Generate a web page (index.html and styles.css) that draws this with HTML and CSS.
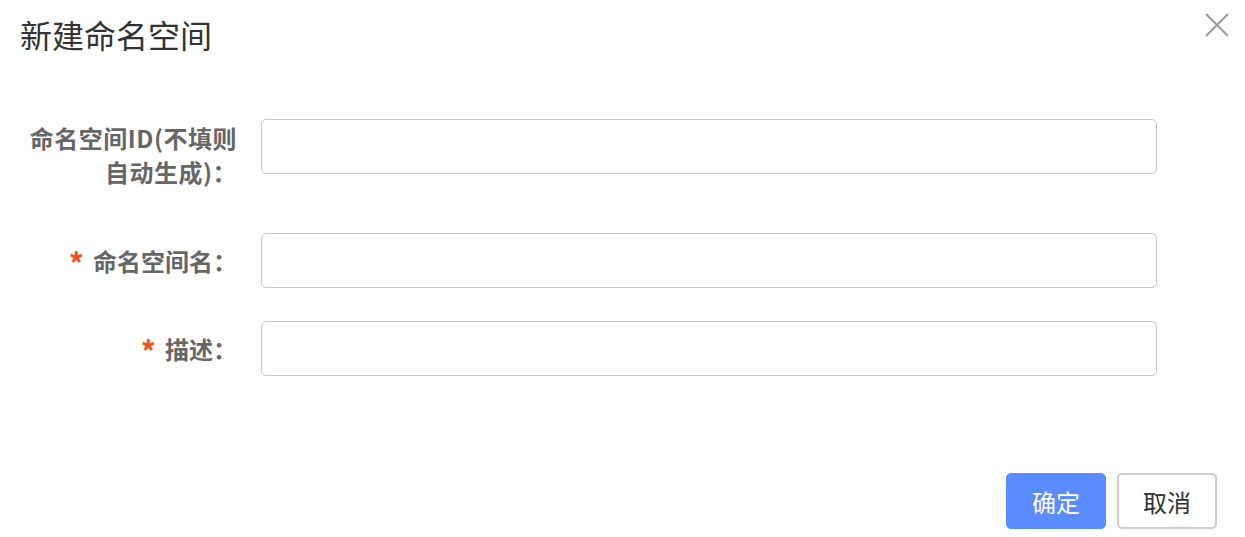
FILE: index.html
```html
<!DOCTYPE html>
<html lang="zh-CN">
<head>
<meta charset="utf-8">
<title>新建命名空间</title>
<link rel="stylesheet" href="styles.css">
</head>
<body>
<div class="dialog">
  <div class="header">
    <h2 class="title">新建命名空间</h2>
    <button class="close" type="button" aria-label="关闭">
      <svg width="24" height="24" viewBox="0 0 24 24"><path d="M1 1L23 23M23 1L1 23" stroke="#9a9a9a" stroke-width="2" fill="none"/></svg>
    </button>
  </div>
  <form class="form">
    <div class="row row-first">
      <label class="label label-wrap">命名空间ID(不填则自动生成)：</label>
      <input class="input" type="text">
    </div>
    <div class="row">
      <label class="label"><span class="req">*</span>命名空间名：</label>
      <input class="input" type="text">
    </div>
    <div class="row">
      <label class="label"><span class="req">*</span>描述：</label>
      <input class="input" type="text">
    </div>
  </form>
  <div class="footer">
    <button class="btn btn-primary" type="button">确定</button>
    <button class="btn btn-default" type="button">取消</button>
  </div>
</div>
</body>
</html>
```
FILE: styles.css
```css
* { box-sizing: border-box; }
html, body { margin: 0; padding: 0; background: #fff; }
body {
  font-family: "Noto Sans CJK SC", "Noto Sans", sans-serif;
  width: 1245px;
  height: 537px;
  overflow: hidden;
}
.dialog { display: flex; flex-direction: column; height: 537px; }
.header {
  display: flex;
  justify-content: space-between;
  align-items: flex-start;
  height: 54px;
  padding: 13px 16px 0 20px;
}
.title {
  margin: 0;
  font-size: 32px;
  line-height: 42px;
  font-weight: normal;
  color: #333;
}
.close {
  border: 0;
  padding: 0;
  background: none;
  width: 24px;
  height: 24px;
  display: block;
  cursor: pointer;
}
.close svg { display: block; }
.form {
  padding: 65px 88px 0 20px;
  margin: 0;
}
.row {
  display: flex;
  align-items: center;
  margin-bottom: 33px;
}
.row-first { align-items: flex-start; margin-bottom: 44px; }
.label {
  width: 217px;
  flex: none;
  margin-right: 24px;
  text-align: right;
  font-size: 24px;
  line-height: 34px;
  font-weight: bold;
  color: #666;
}
.label-wrap { padding-top: 2px; letter-spacing: 0.5px; }
.req {
  color: #f4511e;
  font-size: 30px;
  font-weight: bold;
  margin-right: 9px;
  vertical-align: -4px;
  line-height: 0;
}
.input {
  flex: 1;
  height: 55px;
  border: 1px solid #c6c8d2;
  border-radius: 5px;
  background: #fff;
  outline: none;
  font-size: 20px;
  padding: 0 12px;
}
.footer {
  margin-top: auto;
  display: flex;
  justify-content: flex-end;
  gap: 11px;
  padding: 0 28px 8px 0;
}
.btn {
  width: 100px;
  height: 56px;
  border-radius: 5px;
  font-family: "Noto Sans CJK SC", sans-serif;
  font-size: 24px;
  cursor: pointer;
  padding: 0;
}
.btn-primary {
  background: #5a8bff;
  border: 1px solid #5a8bff;
  color: #fff;
}
.btn-default {
  background: #fff;
  border: 2px solid #c9ccd5;
  color: #333;
}
```
